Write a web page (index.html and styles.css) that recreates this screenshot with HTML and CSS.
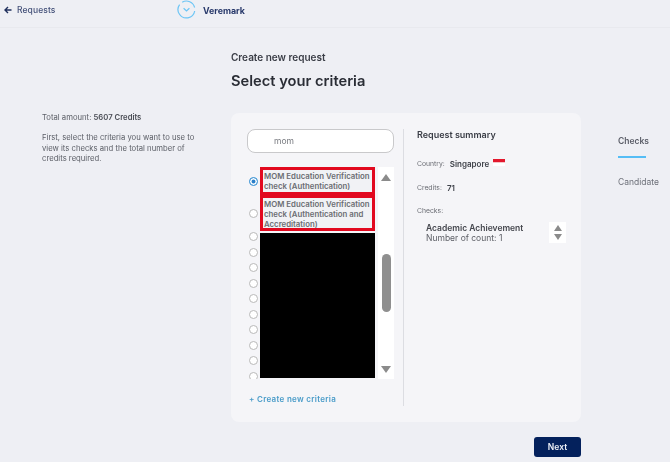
FILE: index.html
```html
<!DOCTYPE html>
<html lang="en">
<head>
<meta charset="utf-8">
<title>Select your criteria</title>
<link rel="stylesheet" href="styles.css">
</head>
<body>
<div class="page">
  <header class="topbar">
    <a class="back">
      <svg class="back-icon" width="8" height="8" viewBox="0 0 8 8"><path d="M4 1 1 4l3 3M1 4h6.5" fill="none" stroke="#1f2f5c" stroke-width="1.4"/></svg>
      Requests
    </a>
    <div class="brand">
      <svg width="19" height="19" viewBox="0 0 19 19"><path d="M5.2 2.2A8.4 8.4 0 0 1 17.6 7.5M17.7 11A8.4 8.4 0 0 1 2.2 13.8 8.4 8.4 0 0 1 2.6 4.6" fill="none" stroke="#6cc5f5" stroke-width="1.2"/><path d="M6.6 8.2 9.5 11l2.9-2.8" fill="none" stroke="#6cc5f5" stroke-width="1.2"/></svg>
      <span>Veremark</span>
    </div>
  </header>
  <main class="content">
    <aside class="intro">
      <p class="total">Total amount: <b>5607 Credits</b></p>
      <p class="hint">First, select the criteria you want to use to view its checks and the total number of credits required.</p>
    </aside>
    <section class="center">
      <p class="eyebrow">Create new request</p>
      <h1>Select your criteria</h1>
      <div class="card">
        <div class="picker">
          <div class="search">mom</div>
          <div class="listbox">
            <div class="options">
              <div class="option first"><i class="radio on"></i><div class="label boxed">MOM Education Verification check (Authentication)</div></div>
              <div class="option second"><i class="radio"></i><div class="label boxed">MOM Education Verification check (Authentication and Accreditation)</div></div>
              <div class="option"><i class="radio"></i></div>
              <div class="option"><i class="radio"></i></div>
              <div class="option"><i class="radio"></i></div>
              <div class="option"><i class="radio"></i></div>
              <div class="option"><i class="radio"></i></div>
              <div class="option"><i class="radio"></i></div>
              <div class="option"><i class="radio"></i></div>
              <div class="option"><i class="radio"></i></div>
              <div class="option"><i class="radio"></i></div>
              <div class="option"><i class="radio"></i></div>
              <div class="redaction"></div>
            </div>
            <div class="scrollbar">
              <svg class="arrow" width="10" height="7" viewBox="0 0 10 7"><path d="M5 0 10 7H0z" fill="#8b8b8b"/></svg>
              <div class="track"><div class="thumb"></div></div>
              <svg class="arrow" width="10" height="7" viewBox="0 0 10 7"><path d="M0 0H10L5 7z" fill="#8b8b8b"/></svg>
            </div>
          </div>
          <a class="create">+ Create new criteria</a>
        </div>
        <div class="summary">
          <h2>Request summary</h2>
          <div class="fact country"><span>Country:</span><b>Singapore</b>
            <svg width="12" height="7" viewBox="0 0 12 7"><rect width="12" height="3.5" fill="#e3182d"/><rect y="3.5" width="12" height="3.5" fill="#fff"/></svg>
          </div>
          <div class="fact credits"><span>Credits:</span><b>71</b></div>
          <div class="fact checks"><span>Checks:</span></div>
          <div class="check">
            <div class="check-text"><b>Academic Achievement</b><span>Number of count: 1</span></div>
            <div class="stepper">
              <svg width="8" height="6" viewBox="0 0 8 6"><path d="M4 0 8 6H0z" fill="#8b8b8b"/></svg>
              <svg width="8" height="6" viewBox="0 0 8 6"><path d="M0 0H8L4 6z" fill="#8b8b8b"/></svg>
            </div>
          </div>
        </div>
      </div>
      <div class="actions"><button class="next">Next</button></div>
    </section>
    <nav class="steps">
      <div class="step active">Checks</div>
      <div class="step">Candidate</div>
    </nav>
  </main>
</div>
</body>
</html>
```
FILE: styles.css
```css
* { box-sizing: border-box; }
html, body { margin: 0; padding: 0; }
body {
  width: 670px;
  height: 462px;
  overflow: hidden;
  background: #eeeff4;
  font-family: Inter, "Liberation Sans", sans-serif;
  color: #33363f;
}
.page { height: 462px; filter: blur(0.35px); }
p, h1, h2 { margin: 0; }

.topbar {
  height: 28px;
  display: flex;
  align-items: center;
  border-bottom: 1px solid #e8e9ee;
  padding: 0 0 9px 4px;
}
.back {
  display: flex;
  align-items: center;
  gap: 5px;
  width: 173px;
  margin-top: 1px;
  font-size: 8.5px;
  font-weight: 500;
  letter-spacing: 0.1px;
  color: #45527a;
}
.brand {
  display: flex;
  align-items: center;
  gap: 7px;
  font-size: 8.8px;
  font-weight: 700;
  color: #27386a;
}
.brand span { padding-top: 2px; }

.content { display: flex; align-items: flex-start; }
.intro { width: 231px; padding: 85px 30px 0 42px; font-size: 7.7px; line-height: 10.3px; color: #5d6068; }
.total { margin-bottom: 10px; font-size: 7.7px; }
.total b { font-weight: 600; color: #4a4d55; }
.hint { width: 160px; }

.center { width: 350px; padding-top: 23px; }
.eyebrow { font-size: 10px; line-height: 12px; font-weight: 600; color: #3a3d46; }
h1 { margin-top: 9px; font-size: 14.7px; line-height: 18px; font-weight: 600; color: #2a2d35; }

.card {
  margin-top: 23px;
  height: 309px;
  display: flex;
  background: #f5f5f8;
  border-radius: 8px;
  padding: 16px 0 16px 16px;
}
.picker { width: 157px; flex: none; border-right: 1px solid #dcdde2; height: 277px; display: flex; flex-direction: column; }
.search {
  width: 147px;
  height: 24px;
  border: 1px solid #c9c9cb;
  border-radius: 8px;
  background: #fff;
  padding-left: 26px;
  font-size: 8.5px;
  line-height: 23px;
  color: #77797f;
}
.listbox { width: 147px; height: 212px; margin-top: 14px; display: flex; background: #fff; overflow: hidden; }
.options { position: relative; width: 131px; flex: none; background: #f5f5f8; }
.option { display: flex; align-items: center; height: 15.5px; }
.option.first { height: 28px; margin-bottom: 3px; }
.option.second { height: 31px; }
.radio {
  flex: none;
  width: 9px;
  height: 9px;
  margin: 0 2px 0 2px;
  border-radius: 50%;
  border: 1px solid #b9b9b9;
  background: #fff;
}
.radio.on { border-color: #4c9ed9; background: #2a7fc9; box-shadow: inset 0 0 0 1.5px #fff; }
.label {
  font-size: 7.8px;
  line-height: 10px;
  font-weight: 600;
  color: #6b6d72;
}
.boxed {
  flex: none;
  width: 115px;
  height: 100%;
  display: flex;
  align-items: center;
  padding: 0 0 0 1px;
  border: 3px solid #e2091f;
  background: #f1f2f5;
}
.option.second .boxed { height: 36px; margin-top: -1px; padding-top: 1px; }
.redaction { position: absolute; left: 13px; top: 66px; width: 115px; height: 145px; background: #000; }
.scrollbar { width: 16px; flex: none; display: flex; flex-direction: column; align-items: center; padding: 7px 0 6px; background: #fff; }
.track { flex: 1; width: 100%; padding-top: 73px; display: flex; justify-content: center; }
.thumb { width: 9px; height: 58px; border-radius: 5px; background: #8f8f8f; }
.create { margin-top: 15px; font-size: 8px; line-height: 11px; font-weight: 600; letter-spacing: 0.3px; color: #4a9cc9; padding-left: 2px; }

.summary { flex: 1; padding: 0 0 0 13px; }
h2 { font-size: 9px; line-height: 12px; font-weight: 600; color: #3a3d46; }
.fact { display: flex; align-items: center; gap: 5px; font-size: 6.8px; line-height: 10px; color: #6a6c73; }
.fact b { font-size: 8px; font-weight: 600; color: #3f424a; }
.country { margin-top: 18px; }
.country svg { margin-left: -1px; margin-top: -4px; }
.credits { margin-top: 14px; }
.checks { margin-top: 13px; }
.check { width: 149px; margin-top: 6px; display: flex; align-items: center; justify-content: space-between; padding-left: 9px; }
.check-text { display: flex; flex-direction: column; font-size: 8.5px; line-height: 10px; color: #5c5e65; }
.check-text b { font-weight: 600; color: #45474e; }
.stepper { width: 17px; height: 21px; background: #fff; display: flex; flex-direction: column; align-items: center; justify-content: center; gap: 3px; }

.actions { display: flex; justify-content: flex-end; margin-top: 15px; }
.next {
  width: 47px;
  height: 20px;
  border: 0;
  border-radius: 3px;
  background: #04215c;
  color: #eef1f8;
  font: 600 8.5px Inter, "Liberation Sans", sans-serif;
}

.steps { margin-left: 37px; padding-top: 108px; font-size: 8.5px; color: #6c6f78; }
.step { line-height: 11px; }
.step.active { width: 28px; height: 22px; border-bottom: 2px solid #55bdf5; margin-bottom: 19px; font-weight: 600; color: #5b5e68; }
```
